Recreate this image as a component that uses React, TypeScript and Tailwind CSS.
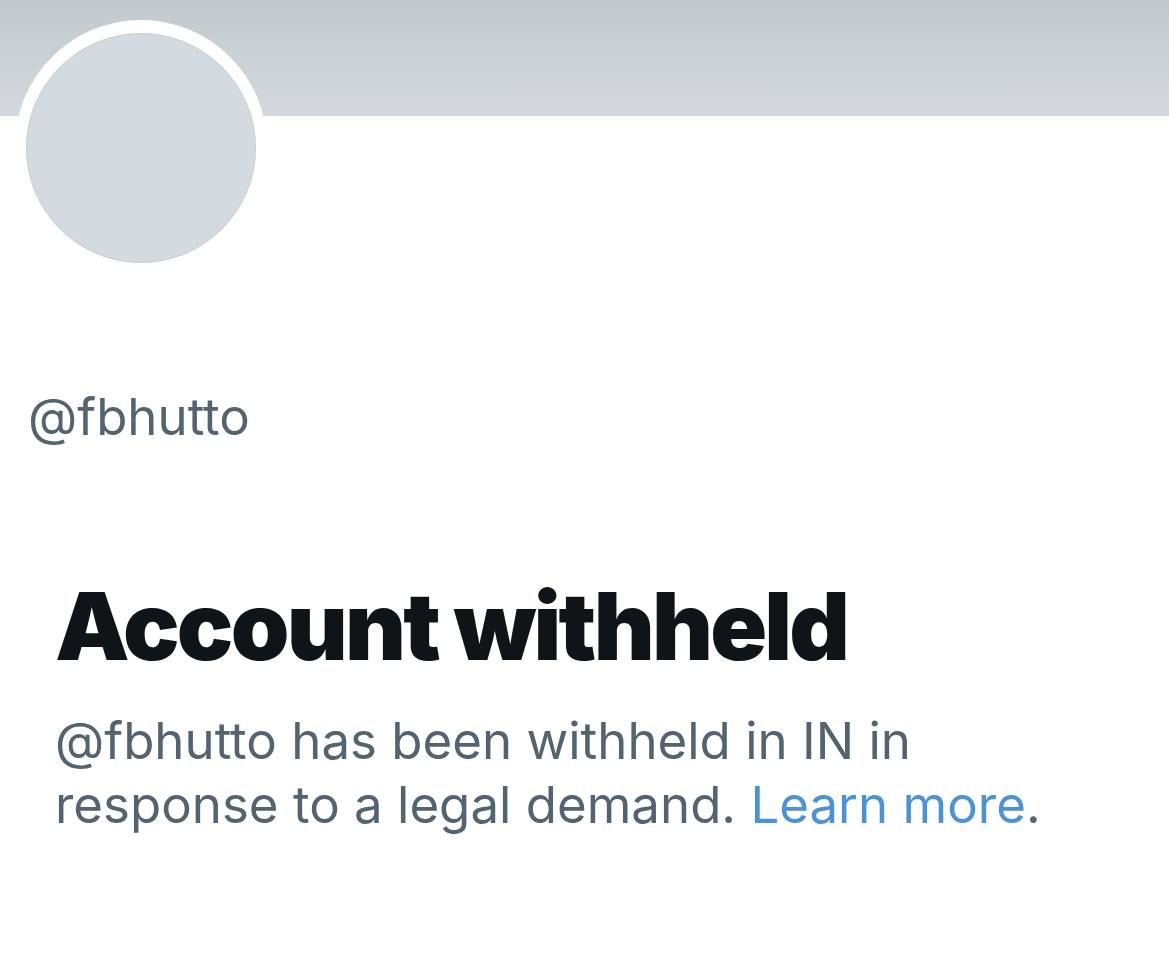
export default function App() {
  return (
    <div className="w-[1169px] h-[965px] bg-white overflow-hidden" style={{ fontFamily: 'Inter, "Liberation Sans", sans-serif' }}>
      <div className="h-[116px] bg-gradient-to-b from-[#c2c9cd] to-[#d3d9de]" />
      <div className="pl-[15px] -mt-[96px]">
        <div className="w-[252px] h-[252px] rounded-full bg-white flex items-center justify-center">
          <div className="mt-[4px] w-[230px] h-[230px] rounded-full bg-[#d3dae0] border border-[#c6cdd2]" />
        </div>
      </div>
      <div className="pl-[28px] mt-[117px] text-[51px] leading-[56px] text-[#536471]">@fbhutto</div>
      <div className="pl-[55px] pr-[40px] mt-[131px]">
        <h1 className="text-[94px] leading-[100px] font-black text-[#0f1419] tracking-[-2.8px]">Account withheld</h1>
        <p className="mt-[33px] text-[51px] leading-[64px] text-[#536471] max-w-[1000px]">
          @fbhutto has been withheld in IN in
          <br />
          response to a legal demand. <span className="text-[#4a93d8]">Learn more</span>.
        </p>
      </div>
    </div>
  );
}
